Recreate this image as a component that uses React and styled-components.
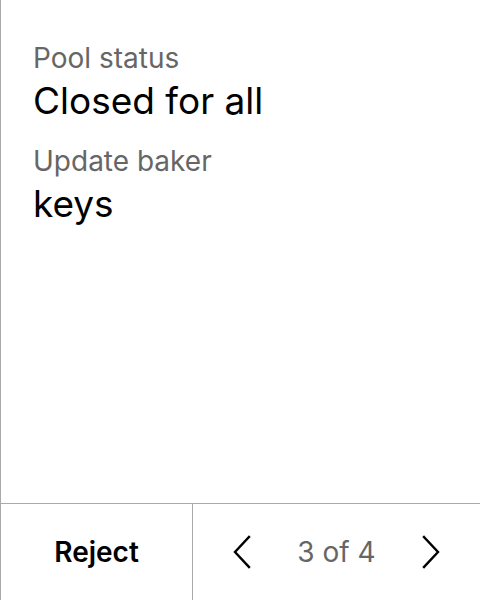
import React from 'react';
import styled, { createGlobalStyle } from 'styled-components';

const Global = createGlobalStyle`
  html, body {
    margin: 0;
    padding: 0;
    background: #fff;
  }
  body {
    font-family: Inter, "Liberation Sans", sans-serif;
  }
`;

const fields = [
  { label: 'Pool status', value: 'Closed for all' },
  { label: 'Update baker', value: 'keys' },
];

const Chevron = ({ dir }) => (
  <svg width="20" height="34" viewBox="0 0 20 34" fill="none">
    <path
      d={dir === 'left' ? 'M17 2 L3 17 L17 32' : 'M3 2 L17 17 L3 32'}
      stroke="#000"
      strokeWidth="2.4"
      strokeLinecap="square"
      strokeLinejoin="miter"
    />
  </svg>
);

const App = () => {
  return (
    <>
      <Global />
      <Page>
        <Body>
          {fields.map(f => (
            <Field key={f.label}>
              <Label>{f.label}</Label>
              <Value>{f.value}</Value>
            </Field>
          ))}
        </Body>
        <Footer>
          <RejectButton>Reject</RejectButton>
          <Pager>
            <ArrowButton>
              <Chevron dir="left" />
            </ArrowButton>
            <Count>3 of 4</Count>
            <ArrowButton>
              <Chevron dir="right" />
            </ArrowButton>
          </Pager>
        </Footer>
      </Page>
    </>
  );
};

export default App;

const Page = styled.div`
  width: 480px;
  height: 600px;
  box-sizing: border-box;
  border-left: 1px solid #aaa;
  display: flex;
  flex-direction: column;
`;

const Body = styled.div`
  flex: 1;
  padding: 41px 32px 0;
  display: flex;
  flex-direction: column;
  gap: 21px;
`;

const Field = styled.div`
  display: flex;
  flex-direction: column;
  gap: 3px;
`;

const Label = styled.div`
  font-size: 28px;
  color: #666;
  line-height: 34px;
`;

const Value = styled.div`
  font-size: 37px;
  color: #000;
  line-height: 45px;
`;

const Footer = styled.div`
  height: 96px;
  border-top: 1px solid #aaa;
  display: flex;
`;

const RejectButton = styled.button`
  width: 192px;
  border: none;
  border-right: 1px solid #aaa;
  background: #fff;
  font-family: inherit;
  font-size: 28px;
  font-weight: 600;
  color: #000;
  padding: 0;
`;

const Pager = styled.div`
  flex: 1;
  display: flex;
  align-items: center;
  justify-content: space-between;
  padding: 0 39px;
`;

const ArrowButton = styled.button`
  border: none;
  background: none;
  padding: 0;
  display: flex;
`;

const Count = styled.div`
  font-size: 28px;
  color: #666;
`;
